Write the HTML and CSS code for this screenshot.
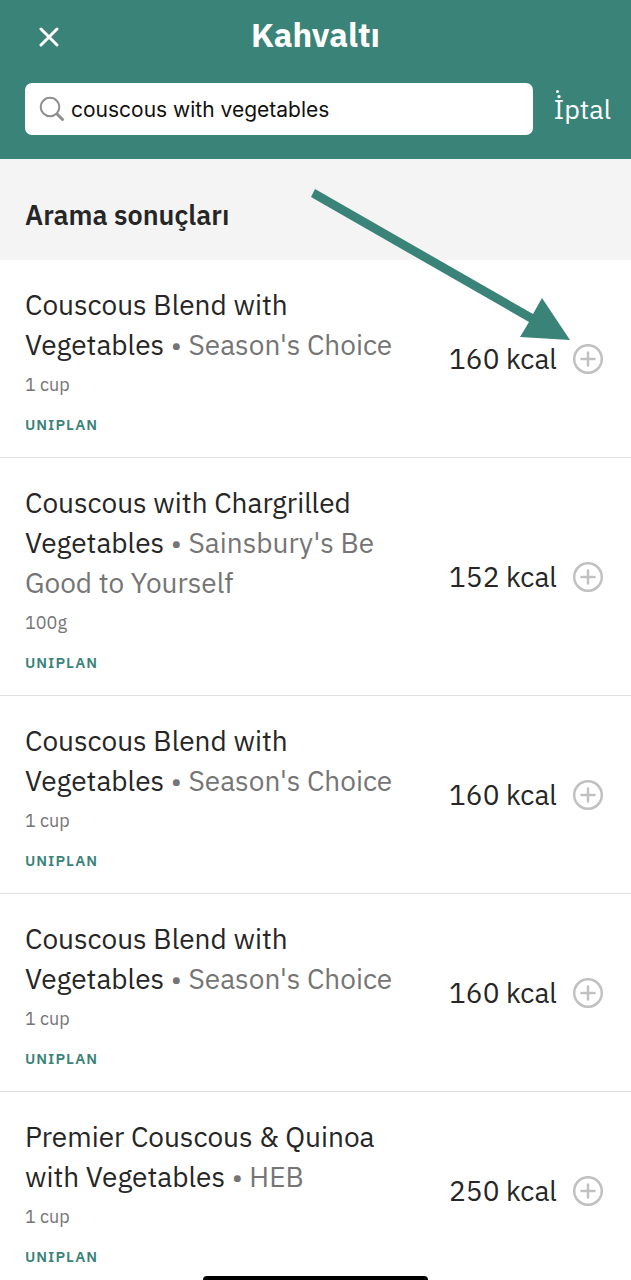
FILE: index.html
```
<!DOCTYPE html>
<html lang="tr">
 <head>
  <meta charset="utf-8">
  <meta name="viewport" content="width=device-width, initial-scale=1">
  <title>Kahvaltı</title>
  <link rel="stylesheet" href="styles.css">
 </head>
 <body>
  <svg class="sprite" aria-hidden="true">
   <symbol id="plus" viewBox="0 0 30 30">
    <circle cx="15" cy="15" r="13.8"/>
    <path d="M15 8.500v13M8.500 15h13"/>
   </symbol>
  </svg>

  <header class="header">
   <div class="topbar">
    <button class="close" type="button" aria-label="Kapat">
     <svg width="20" height="20" viewBox="0 0 20 20"><path d="M2 2l16 16M18 2L2 18"/></svg>
    </button>
    <h1 class="title">Kahvaltı</h1>
   </div>
   <form class="search">
    <label class="searchBox">
     <svg class="searchIcon" width="26" height="26" viewBox="0 0 26 26"><circle cx="11" cy="11" r="9.300"/><path class="handle" d="M18 18l5.500 5.500"/></svg>
     <input class="searchInput" type="text" aria-label="Ara" value="couscous with vegetables">
    </label>
    <button class="cancel" type="button">İptal</button>
   </form>
  </header>

  <main>
   <h2 class="sectionTitle">Arama sonuçları</h2>
   <ul class="results">
    <li class="item">
     <div class="info">
      <p class="name">Couscous Blend with Vegetables <span class="brand">• Season's Choice</span></p>
      <p class="portion">1 cup</p>
      <p class="source">UNIPLAN</p>
     </div>
     <span class="kcal">160 kcal</span>
     <button class="add" type="button" aria-label="Ekle"><svg><use href="#plus"/></svg></button>
     <!-- arrow to the add button -->
     <svg class="arrow" width="260" height="152" viewBox="0 0 260 152" aria-hidden="true">
      <path d="M4 0L222 125L231 109L259 151L209 148L218 133L0 8z"/>
     </svg>
    </li>
    <li class="item">
     <div class="info">
      <p class="name">Couscous with Chargrilled Vegetables <span class="brand">• Sainsbury's Be Good to Yourself</span></p>
      <p class="portion">100g</p>
      <p class="source">UNIPLAN</p>
     </div>
     <span class="kcal">152 kcal</span>
     <button class="add" type="button" aria-label="Ekle"><svg><use href="#plus"/></svg></button>
    </li>
    <li class="item">
     <div class="info">
      <p class="name">Couscous Blend with Vegetables <span class="brand">• Season's Choice</span></p>
      <p class="portion">1 cup</p>
      <p class="source">UNIPLAN</p>
     </div>
     <span class="kcal">160 kcal</span>
     <button class="add" type="button" aria-label="Ekle"><svg><use href="#plus"/></svg></button>
    </li>
    <li class="item">
     <div class="info">
      <p class="name">Couscous Blend with Vegetables <span class="brand">• Season's Choice</span></p>
      <p class="portion">1 cup</p>
      <p class="source">UNIPLAN</p>
     </div>
     <span class="kcal">160 kcal</span>
     <button class="add" type="button" aria-label="Ekle"><svg><use href="#plus"/></svg></button>
    </li>
    <li class="item">
     <div class="info">
      <p class="name">Premier Couscous &amp; Quinoa with Vegetables <span class="brand">• HEB</span></p>
      <p class="portion">1 cup</p>
      <p class="source">UNIPLAN</p>
     </div>
     <span class="kcal">250 kcal</span>
     <button class="add" type="button" aria-label="Ekle"><svg><use href="#plus"/></svg></button>
    </li>
   </ul>
  </main>
  <div class="homeBar"></div>
 </body>
</html>
```
FILE: styles.css
```
* { box-sizing: border-box; }
body {
    margin: 0;
    background: #fff;
    color: #262626;
    font-family: "IBM Plex Sans", "Noto Sans", sans-serif;
    font-size: 28px;
    line-height: 40px;
}
h1, h2, p, ul { margin: 0; padding: 0; }
button {
    padding: 0;
    border: 0;
    background: none;
    color: inherit;
    font: inherit;
    cursor: pointer;
}
svg { display: block; }
.sprite { display: none; }

.header {
    padding: 15px 20px 24px 25px;
    background: #3a8378;
    color: #fff;
}
.topbar {
    display: grid;
    grid-template-columns: 48px 1fr 48px;
    align-items: center;
    padding-right: 5px;
}
.close {
    justify-self: center;
    padding-top: 4px;
}
.close path {
    fill: none;
    stroke: #fff;
    stroke-width: 3;
    stroke-linecap: round;
}
.title {
    text-align: center;
    font-size: 33px;
    line-height: 40px;
    font-weight: 700;
}
.search {
    display: flex;
    align-items: center;
    gap: 20px;
    margin-top: 28px;
}
.searchBox {
    display: flex;
    flex: 1;
    align-items: center;
    gap: 6px;
    min-width: 0;
    height: 52px;
    padding: 0 14px;
    border-radius: 7px;
    background: #fff;
}
.searchIcon {
    flex: none;
    fill: none;
    stroke: #8e8e8e;
    stroke-width: 2;
}
.handle {
    stroke-width: 3;
    stroke-linecap: round;
}
.searchInput {
    flex: 1;
    min-width: 0;
    padding: 0;
    border: 0;
    outline: 0;
    background: none;
    color: #111;
    font-family: Inter, sans-serif;
    font-size: 21px;
}
.cancel {
    position: relative;
    font-size: 27px;
}
/* second dot over the capital letter */
.cancel::before {
    content: "";
    position: absolute;
    top: 1px;
    left: 3px;
    width: 3px;
    height: 3px;
    border-radius: 50%;
    background: #fff;
}

.sectionTitle {
    padding: 36px 25px 25px;
    background: #f4f4f4;
    font-size: 27px;
    font-weight: 600;
}
.results { list-style: none; }
.item {
    position: relative;
    display: flex;
    align-items: center;
    padding: 12px 28px 12px 25px;
    border-bottom: 1px solid #e0e0e0;
}
.info {
    flex: 1;
    margin-right: 28px;
    padding-top: 13px;
}
.brand, .portion { color: #757575; }
.portion { font-size: 18px; }
.source {
    color: #3a8378;
    font-size: 15px;
    font-weight: 600;
    letter-spacing: 1px;
}
.kcal {
    margin-right: 16px;
    white-space: nowrap;
}
.add svg {
    width: 30px;
    height: 30px;
    fill: none;
    stroke: #c1c1c1;
    stroke-width: 2.5;
    stroke-linecap: round;
}
.arrow {
    position: absolute;
    top: -71px;
    right: 60px;
    fill: #3a8378;
}
.homeBar {
    position: fixed;
    bottom: 0;
    left: 50%;
    width: 225px;
    height: 4px;
    margin-left: -113px;
    border-radius: 4px 4px 0 0;
    background: #000;
}
```
